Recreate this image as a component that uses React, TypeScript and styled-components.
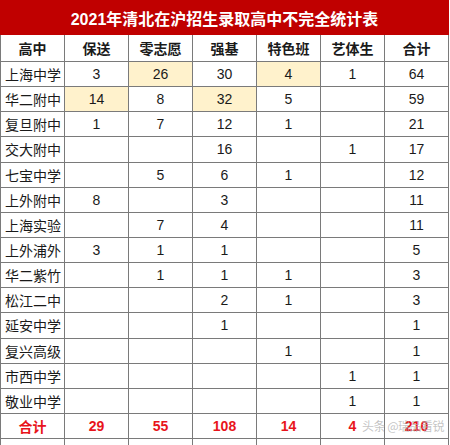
import React from "react"
import styled, { createGlobalStyle } from "styled-components"

const GlobalStyle = createGlobalStyle`
  html, body {
    margin: 0;
    padding: 0;
    background: #ffffff;
  }
  body {
    font-family: "Liberation Sans", "Noto Sans CJK SC", sans-serif;
  }
`

const Sheet = styled.div`
  position: relative;
  width: 449px;
  height: 445px;
  overflow: hidden;
  background: #ffffff;
`

const Title = styled.div`
  height: 35px;
  background: #c00000;
  color: #ffffff;
  font-family: "Liberation Sans", "Noto Sans CJK SC", sans-serif;
  font-weight: 700;
  font-size: 16px;
  display: flex;
  align-items: center;
  justify-content: center;
`

const Grid = styled.div`
  display: grid;
  grid-template-columns: repeat(7, 64px);
  border-left: 1px solid #7a7a7a;
`

const Cell = styled.div<{ $head?: boolean; $total?: boolean; $hl?: boolean; $name?: boolean }>`
  height: ${(p) => (p.$head ? "27px" : "25.15px")};
  box-sizing: border-box;
  border-right: 1px solid #7a7a7a;
  border-bottom: 1px solid #7a7a7a;
  background: ${(p) => (p.$hl ? "#fff2cc" : "#ffffff")};
  display: flex;
  align-items: center;
  justify-content: ${(p) => (p.$name && !p.$total ? "flex-start" : "center")};
  padding-left: ${(p) => (p.$name && !p.$total ? "4px" : "0")};
  font-size: 14px;
  font-weight: ${(p) => (p.$head || p.$total ? 700 : 400)};
  color: ${(p) => (p.$total ? "#e8141b" : "#1a1a1a")};
  white-space: nowrap;
`

const Spacer = styled.div`
  height: 8px;
  border-right: 1px solid #7a7a7a;
`

const Watermark = styled.div`
  position: absolute;
  right: 5px;
  bottom: 11px;
  font-size: 12px;
  color: rgba(170, 170, 170, 0.7);
  font-family: "Noto Sans CJK SC", sans-serif;
  letter-spacing: -0.5px;
`

const headers = ["高中", "保送", "零志愿", "强基", "特色班", "艺体生", "合计"]

type Row = [string, string, string, string, string, string, string]

const rows: Row[] = [
  ["上海中学", "3", "26", "30", "4", "1", "64"],
  ["华二附中", "14", "8", "32", "5", "", "59"],
  ["复旦附中", "1", "7", "12", "1", "", "21"],
  ["交大附中", "", "", "16", "", "1", "17"],
  ["七宝中学", "", "5", "6", "1", "", "12"],
  ["上外附中", "8", "", "3", "", "", "11"],
  ["上海实验", "", "7", "4", "", "", "11"],
  ["上外浦外", "3", "1", "1", "", "", "5"],
  ["华二紫竹", "", "1", "1", "1", "", "3"],
  ["松江二中", "", "", "2", "1", "", "3"],
  ["延安中学", "", "", "1", "", "", "1"],
  ["复兴高级", "", "", "", "1", "", "1"],
  ["市西中学", "", "", "", "", "1", "1"],
  ["敬业中学", "", "", "", "", "1", "1"],
]

const totals: Row = ["合计", "29", "55", "108", "14", "4", "210"]

// highlighted cells: "row-col"
const highlights = new Set(["0-2", "0-4", "1-1", "1-3"])

const App = () => {
  return (
    <Sheet>
      <GlobalStyle />
      <Title>2021年清北在沪招生录取高中不完全统计表</Title>
      <Grid>
        {headers.map((h) => (
          <Cell key={h} $head>
            {h}
          </Cell>
        ))}
        {rows.map((row, r) =>
          row.map((v, c) => (
            <Cell key={`${r}-${c}`} $name={c === 0} $hl={highlights.has(`${r}-${c}`)}>
              {v}
            </Cell>
          ))
        )}
        {totals.map((v, c) => (
          <Cell key={`t-${c}`} $total $name={c === 0}>
            {v}
          </Cell>
        ))}
        {headers.map((h) => (
          <Spacer key={`s-${h}`} />
        ))}
      </Grid>
      <Watermark>头条 @瑞品看锐</Watermark>
    </Sheet>
  )
}

export default App
